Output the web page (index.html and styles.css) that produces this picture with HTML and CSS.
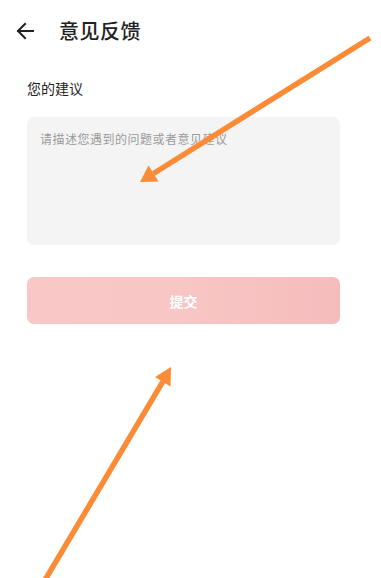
FILE: index.html
```html
<!DOCTYPE html>
<html lang="zh">
<head>
<meta charset="utf-8">
<link rel="stylesheet" href="styles.css">
</head>
<body>
<div class="page">
  <div class="header">
    <svg class="back" width="18" height="18" viewBox="0 0 18 18"><path d="M17 9H2M9 2L2 9l7 7" fill="none" stroke="#222" stroke-width="2" stroke-linecap="square"/></svg>
    <div class="title">意见反馈</div>
  </div>
  <div class="content">
    <div class="label">您的建议</div>
    <div class="textarea"><span class="placeholder">请描述您遇到的问题或者意见建议</span></div>
    <div class="submit">提交</div>
  </div>
  <svg class="overlay" width="381" height="578" viewBox="0 0 381 578">
    <g fill="#fb8b36" stroke="#fb8b36">
      <line x1="370" y1="38" x2="153.5" y2="173.5" stroke-width="5.5"/>
      <polygon points="140,182 158.5,181.5 148.5,165.5" stroke="none"/>
      <line x1="45" y1="580" x2="162.8" y2="381.7" stroke-width="5.5"/>
      <polygon points="171,367 170.5,386.5 155,377" stroke="none"/>
    </g>
  </svg>
</div>
</body>
</html>
```
FILE: styles.css
```css
html, body {
  margin: 0;
  padding: 0;
  background: #fff;
}
.page {
  position: relative;
  width: 381px;
  height: 578px;
  overflow: hidden;
  font-family: "Noto Sans CJK SC", "Noto Sans", sans-serif;
}
.header {
  display: flex;
  align-items: center;
  height: 61px;
  padding-left: 16px;
}
.back {
  display: block;
}
.title {
  margin-left: 25px;
  font-size: 20px;
  font-weight: 500;
  color: #222;
  letter-spacing: 0.5px;
}
.content {
  padding: 0 41px 0 27px;
}
.label {
  margin-top: 18px;
  font-size: 14px;
  line-height: 18px;
  color: #222;
}
.textarea {
  margin-top: 20px;
  height: 128px;
  background: #f4f4f4;
  border-radius: 7px;
  padding: 8px 13px;
  box-sizing: border-box;
}
.placeholder {
  font-size: 12px;
  line-height: 16px;
  color: #9a9a9a;
  letter-spacing: 0.5px;
}
.submit {
  margin-top: 32px;
  height: 47px;
  border-radius: 7px;
  background: linear-gradient(90deg, #f9c8c6 0%, #f8c6c4 50%, #f5bcbc 100%);
  color: #fff;
  font-size: 14px;
  font-weight: 700;
  display: flex;
  align-items: center;
  justify-content: center;
}
.overlay {
  position: absolute;
  left: 0;
  top: 0;
  pointer-events: none;
}
```
